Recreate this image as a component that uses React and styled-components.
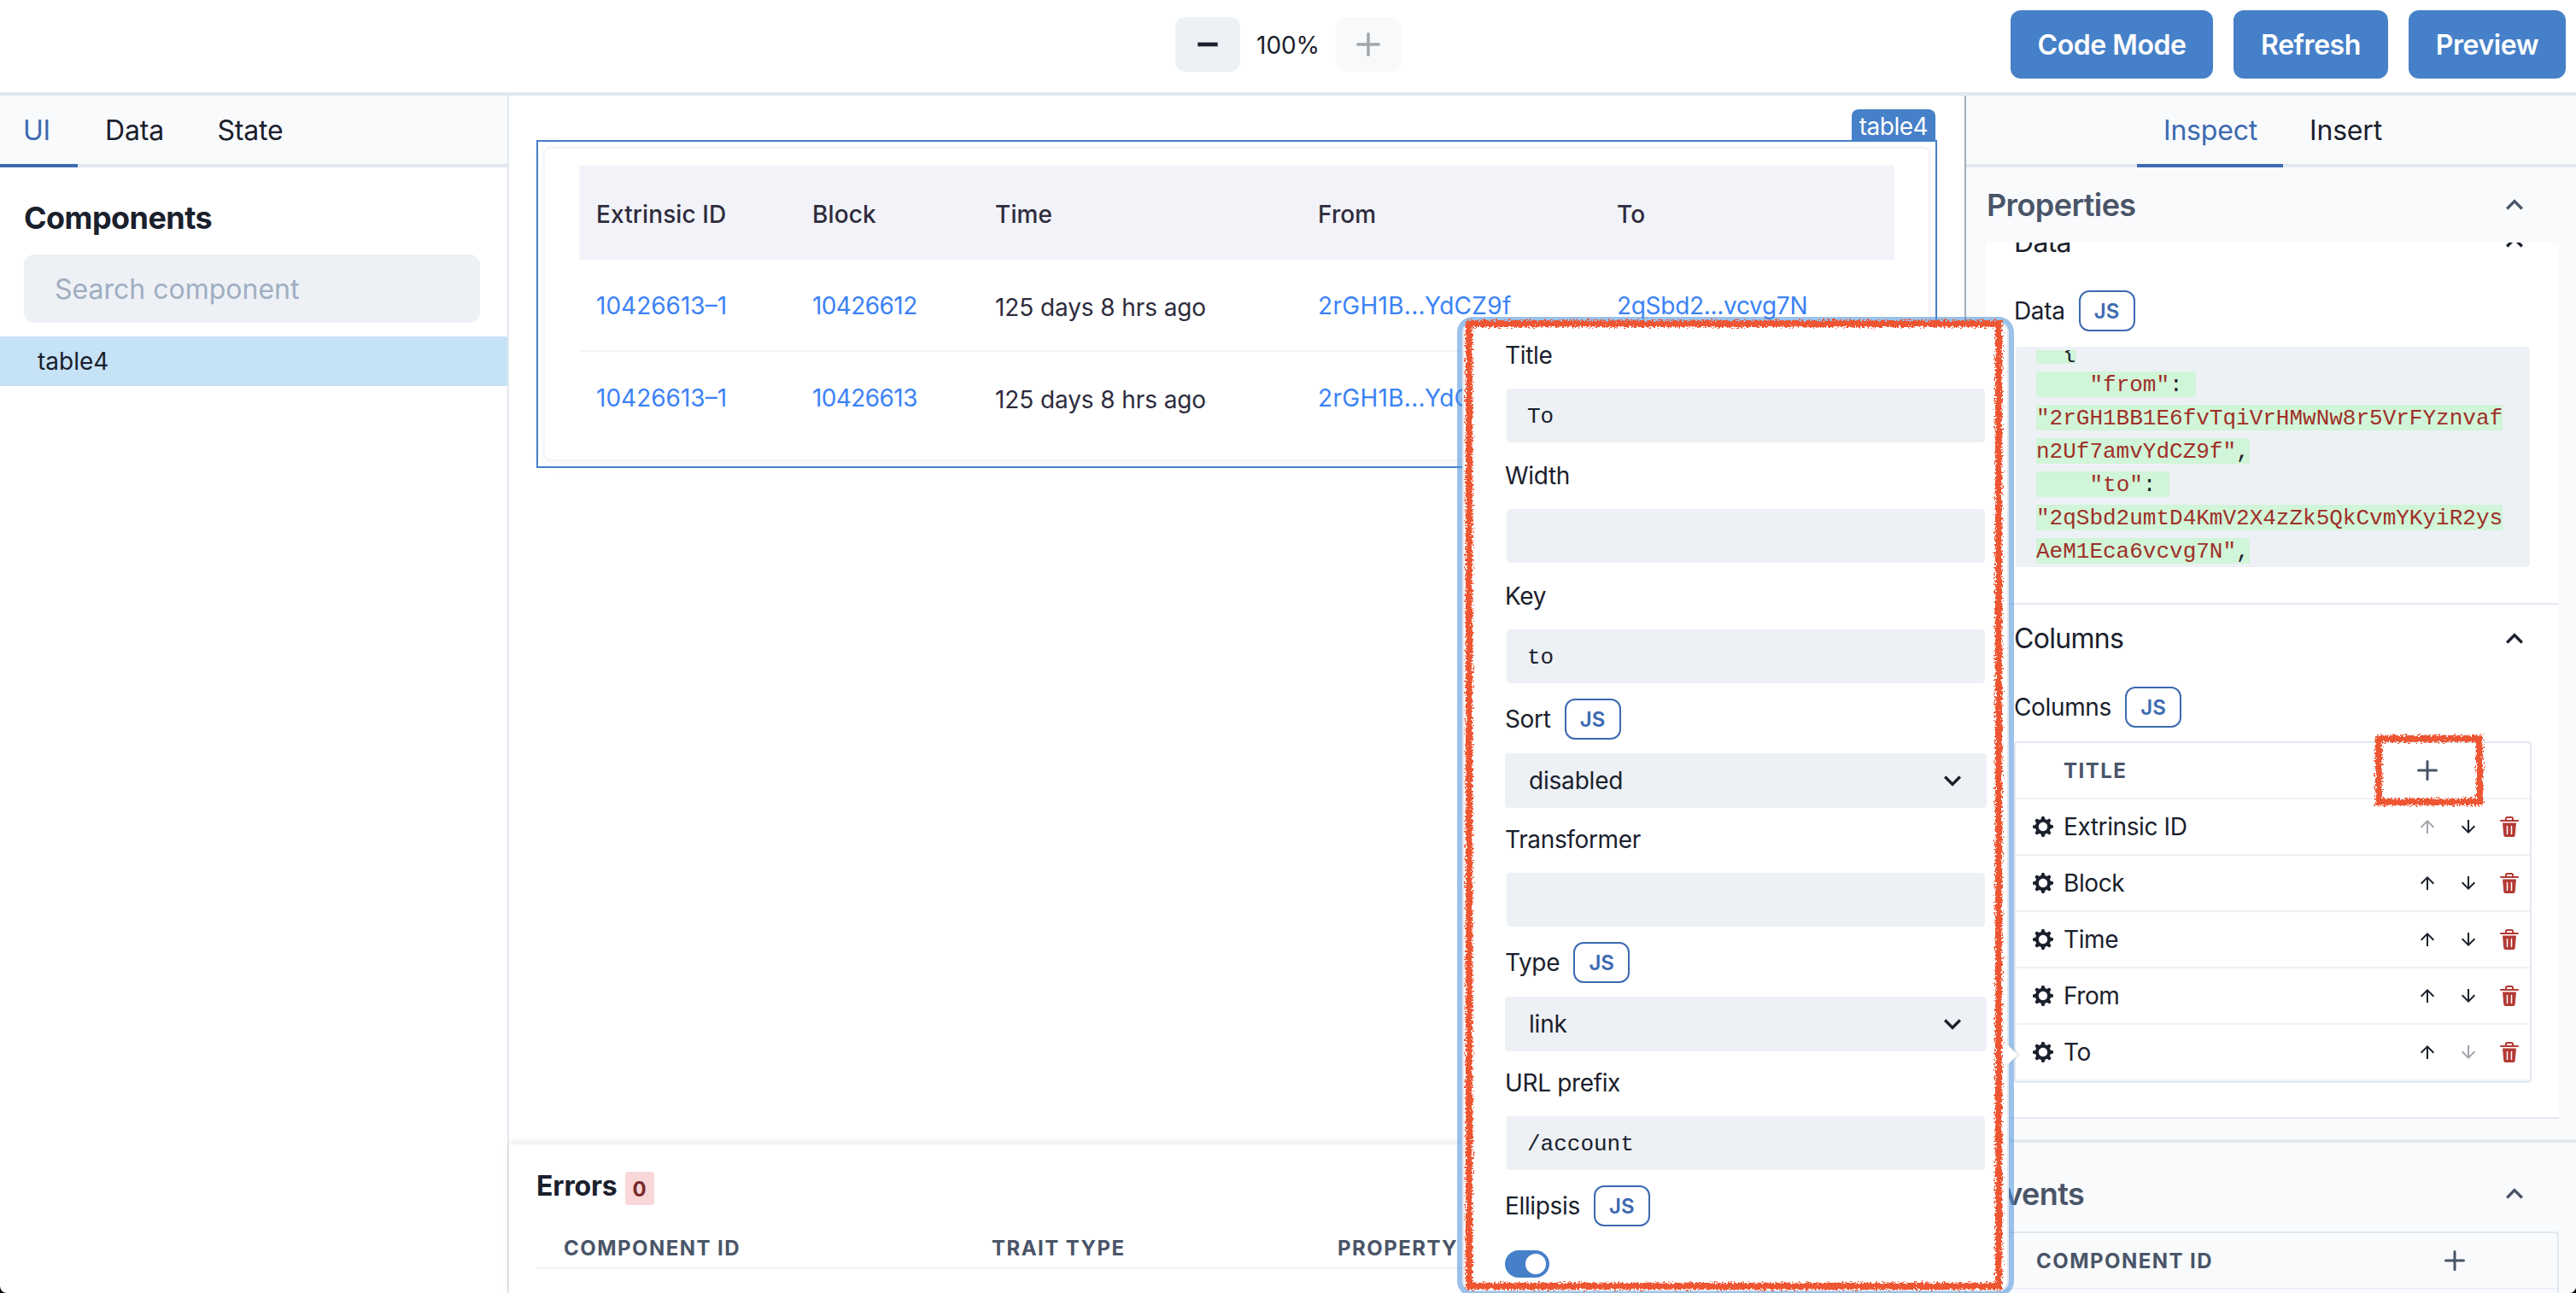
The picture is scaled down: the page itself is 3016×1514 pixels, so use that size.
import React, { useState } from "react";
import styled, { createGlobalStyle } from "styled-components";

const columns = ["Extrinsic ID", "Block", "Time", "From", "To"];

const rows = [
  { id: "10426613–1", block: "10426612", time: "125 days 8 hrs ago", from: "2rGH1B...YdCZ9f", to: "2qSbd2...vcvg7N" },
  { id: "10426613–1", block: "10426613", time: "125 days 8 hrs ago", from: "2rGH1B...YdCZ9f", to: "2qSbd2...vcvg7N" },
];

const Icon = ({ size = 24, box = 24, children }) => (
  <svg width={size} height={size} viewBox={`0 0 ${box} ${box}`} fill="currentColor">
    {children}
  </svg>
);

const AddIcon = ({ size }) => (
  <Icon size={size}>
    <path d="M0,12a1.5,1.5,0,0,0,1.5,1.5h8.75a.25.25,0,0,1,.25.25V22.5a1.5,1.5,0,0,0,3,0V13.75a.25.25,0,0,1,.25-.25H22.5a1.5,1.5,0,0,0,0-3H13.75a.25.25,0,0,1-.25-.25V1.5a1.5,1.5,0,0,0-3,0v8.75a.25.25,0,0,1-.25.25H1.5A1.5,1.5,0,0,0,0,12Z" />
  </Icon>
);

const MinusIcon = ({ size }) => (
  <Icon size={size}>
    <rect x="2" y="10" width="20" height="4" />
  </Icon>
);

const ChevronUp = () => (
  <Icon size={40}>
    <path d="M12 8l-6 6 1.41 1.41L12 10.83l4.59 4.58L18 14z" />
  </Icon>
);

const ChevronDown = () => (
  <Icon size={40}>
    <path d="M16.59 8.59L12 13.17 7.41 8.59 6 10l6 6 6-6z" />
  </Icon>
);

const ArrowUp = () => (
  <Icon>
    <path d="M4 12l1.41 1.41L11 7.83V20h2V7.83l5.58 5.59L20 12l-8-8-8 8z" />
  </Icon>
);

const ArrowDown = () => (
  <Icon>
    <path d="M20 12l-1.41-1.41L13 16.17V4h-2v12.17l-5.58-5.59L4 12l8 8 8-8z" />
  </Icon>
);

const GearIcon = () => (
  <Icon box={14}>
    <path
      fillRule="evenodd"
      d="M14 7.77v-1.6l-1.94-.64-.45-1.09.88-1.84-1.13-1.13-1.81.91-1.09-.45-.69-1.92h-1.6l-.63 1.94-1.11.45-1.84-.88-1.13 1.13.91 1.81-.45 1.09L0 6.23v1.59l1.94.64.45 1.09-.88 1.84 1.13 1.13 1.81-.91 1.09.45.69 1.92h1.59l.63-1.94 1.11-.45 1.84.88 1.13-1.13-.92-1.81.47-1.09L14 7.75v.02zM7 10c-1.66 0-3-1.34-3-3s1.34-3 3-3 3 1.34 3 3-1.34 3-3 3z"
    />
  </Icon>
);

const TrashIcon = () => (
  <Icon>
    <path d="M19.452 7.5H4.547a.5.5 0 00-.5.545l1.287 14.136A2 2 0 007.326 24h9.347a2 2 0 001.992-1.819L19.95 8.045a.5.5 0 00-.129-.382.5.5 0 00-.369-.163zm-9.2 13a.75.75 0 01-1.5 0v-9a.75.75 0 011.5 0zm5 0a.75.75 0 01-1.5 0v-9a.75.75 0 011.5 0zM22 4h-4.75a.25.25 0 01-.25-.25V2.5A2.5 2.5 0 0014.5 0h-5A2.5 2.5 0 007 2.5v1.25a.25.25 0 01-.25.25H2a1 1 0 000 2h20a1 1 0 000-2zM9 3.75V2.5a.5.5 0 01.5-.5h5a.5.5 0 01.5.5v1.25a.25.25 0 01-.25.25h-5.5A.25.25 0 019 3.75z" />
  </Icon>
);

// crayon style highlight frame
const Crayon = ({ width, height, id }) => (
  <svg width={width} height={height}>
    <filter id={id} filterUnits="userSpaceOnUse" x="0" y="0" width={width} height={height}>
      <feTurbulence type="fractalNoise" baseFrequency="0.45" numOctaves="2" seed="4" result="noise" />
      <feDisplacementMap in="SourceGraphic" in2="noise" scale="9" xChannelSelector="R" yChannelSelector="G" />
    </filter>
    <rect
      x="8"
      y="8"
      width={width - 16}
      height={height - 16}
      fill="none"
      stroke="#ee5430"
      strokeWidth="8"
      filter={`url(#${id})`}
    />
  </svg>
);

function App() {
  const [ellipsis, setEllipsis] = useState(true);

  return (
    <Window>
      <GlobalStyle />
      <Header>
        <span />
        <Zoom>
          <ZoomButton><MinusIcon size={28} /></ZoomButton>
          <ZoomValue>100%</ZoomValue>
          <ZoomButton disabled><AddIcon size={28} /></ZoomButton>
        </Zoom>
        <Actions>
          <Button $w={237}>Code Mode</Button>
          <Button $w={181}>Refresh</Button>
          <Button $w={184}>Preview</Button>
        </Actions>
      </Header>
      <Body>
        <Sidebar>
          <Tabs $start>
            <Tab $active $w={91} $pad="0 5px 0 0">UI</Tab>
            <Tab $w={133}>Data</Tab>
            <Tab $w={138}>State</Tab>
          </Tabs>
          <SidebarTitle>Components</SidebarTitle>
          <Search placeholder="Search component" />
          <TreeItem>table4</TreeItem>
        </Sidebar>
        <Main>
          <Canvas>
            <Selection>
              <SelectionTag>table4</SelectionTag>
              <Card>
                <TableHead>
                  {columns.map((c) => <span key={c}>{c}</span>)}
                </TableHead>
                {rows.map((row, i) => (
                  <TableRow key={i}>
                    <Link>{row.id}</Link>
                    <Link $spacing={-0.6}>{row.block}</Link>
                    <span>{row.time}</span>
                    <Link $spacing={0.3}>{row.from}</Link>
                    <Link $spacing={-0.3}>{row.to}</Link>
                  </TableRow>
                ))}
              </Card>
            </Selection>
          </Canvas>
          <Errors>
            <ErrorsTitle>Errors <Badge>0</Badge></ErrorsTitle>
            <ErrorsHead>
              <Caps>COMPONENT ID</Caps>
              <Caps>TRAIT TYPE</Caps>
              <Caps>PROPERTY</Caps>
            </ErrorsHead>
          </Errors>
        </Main>
        <Inspector>
          <Tabs $pad="0 0 0 3px">
            <Tab $active $w={171} $pad="0 0 0 1px">Inspect</Tab>
            <Tab $w={146} $pad="0 0 0 1px">Insert</Tab>
          </Tabs>
          <PanelHeader>Properties<ChevronUp /></PanelHeader>
          <PanelBody>
            <Scrolled>
              <Section>
                <SectionHeader>Data<ChevronUp /></SectionHeader>
                <SectionBody>
                  <LabelRow>Data<JsButton>JS</JsButton></LabelRow>
                  <Code>
                    <pre>
                      <mark>{"  {"}</mark>{"\n"}
                      <mark>{"    "}<b>"from"</b>{": "}</mark>{"\n"}
                      <mark><b>"2rGH1BB1E6fvTqiVrHMwNw8r5VrFYznvaf</b></mark>{"\n"}
                      <mark><b>n2Uf7amvYdCZ9f"</b>,</mark>{"\n"}
                      <mark>{"    "}<b>"to"</b>{": "}</mark>{"\n"}
                      <mark><b>"2qSbd2umtD4KmV2X4zZk5QkCvmYKyiR2ys</b></mark>{"\n"}
                      <mark><b>AeM1Eca6vcvg7N"</b>,</mark>
                    </pre>
                  </Code>
                </SectionBody>
              </Section>
              <Section>
                <SectionHeader>Columns<ChevronUp /></SectionHeader>
                <SectionBody>
                  <LabelRow>Columns<JsButton>JS</JsButton></LabelRow>
                  <List>
                    <ListRow>
                      <Caps $indent={56}>TITLE</Caps>
                      <IconButton $color="#4a5568"><AddIcon /></IconButton>
                      <AddFrame><Crayon id="frame-add" width={134} height={90} /></AddFrame>
                      <span />
                      <span />
                    </ListRow>
                    {columns.map((name, i) => (
                      <ListRow key={name}>
                        <ListName><GearIcon />{name}</ListName>
                        <IconButton disabled={i === 0}><ArrowUp /></IconButton>
                        <IconButton disabled={i === columns.length - 1}><ArrowDown /></IconButton>
                        <IconButton $color="#b43a35"><TrashIcon /></IconButton>
                      </ListRow>
                    ))}
                  </List>
                </SectionBody>
              </Section>
            </Scrolled>
          </PanelBody>
          <EventsPanel>
            <PanelHeader>Events<ChevronUp /></PanelHeader>
            <EventsTable>
              <EventsRow>
                <Caps $indent={56}>COMPONENT ID</Caps>
                <AddIcon />
              </EventsRow>
            </EventsTable>
          </EventsPanel>
        </Inspector>
      </Body>

      <Popover>
        <PopoverArrow />
        <Field>
          <Label>Title</Label>
          <Input defaultValue="To" />
        </Field>
        <Field>
          <Label>Width</Label>
          <Input />
        </Field>
        <Field>
          <Label>Key</Label>
          <Input defaultValue="to" />
        </Field>
        <Field>
          <LabelRow>Sort<JsButton>JS</JsButton></LabelRow>
          <Select>disabled<ChevronDown /></Select>
        </Field>
        <Field>
          <Label>Transformer</Label>
          <Input />
        </Field>
        <Field>
          <LabelRow>Type<JsButton>JS</JsButton></LabelRow>
          <Select>link<ChevronDown /></Select>
        </Field>
        <Field>
          <Label>URL prefix</Label>
          <Input defaultValue="/account" />
        </Field>
        <Field>
          <LabelRow>Ellipsis<JsButton>JS</JsButton></LabelRow>
          <Switch $on={ellipsis} onClick={() => setEllipsis(!ellipsis)} />
        </Field>
        <PopoverFrame><Crayon id="frame-popover" width={636} height={1143} /></PopoverFrame>
      </Popover>
    </Window>
  );
}

const GlobalStyle = createGlobalStyle`
  * {
    box-sizing: border-box;
  }

  html {
    background: #000;
  }

  body {
    margin: 0;
    overflow: hidden;
    color: #1a202c;
    font-family: Inter, "Liberation Sans", sans-serif;
    font-size: 32px;
    line-height: 1.5;
  }

  svg {
    display: block;
    flex-shrink: 0;
  }

  button,
  input {
    border: none;
    padding: 0;
    color: inherit;
    font-family: inherit;
  }
`;

const Window = styled.div`
  position: relative;
  display: flex;
  flex-direction: column;
  width: 3016px;
  height: 1514px;
  overflow: hidden;
  background: #fff;
  border-radius: 0 0 8px 8px;
`;

const Header = styled.header`
  display: grid;
  grid-template-columns: 1fr auto 1fr;
  align-items: center;
  height: 112px;
  padding: 0 12px 4px 12px;
  border-bottom: 4px solid #e2e8f0;
`;

const Zoom = styled.div`
  display: flex;
  align-items: center;
`;

const ZoomButton = styled.button`
  display: flex;
  align-items: center;
  justify-content: center;
  width: 76px;
  height: 64px;
  border-radius: 12px;
  background: #edf1f6;

  &:disabled {
    opacity: 0.4;
  }
`;

const ZoomValue = styled.span`
  width: 112px;
  padding-top: 1px;
  text-align: center;
  font-size: 28px;
  letter-spacing: -0.1px;
`;

const Actions = styled.div`
  display: flex;
  justify-content: flex-end;
  gap: 24px;
`;

const Button = styled.button`
  width: ${(p) => p.$w}px;
  height: 80px;
  padding-top: 1px;
  border-radius: 12px;
  background: #4680c8;
  color: #fff;
  font-size: 32px;
  font-weight: 600;
  letter-spacing: -0.45px;
`;

const Body = styled.div`
  display: flex;
  flex: 1;
  min-height: 0;
`;

const Sidebar = styled.aside`
  width: 596px;
  border-right: 2px solid #e2e8f0;
`;

const Tabs = styled.div`
  display: flex;
  justify-content: ${(p) => (p.$start ? "flex-start" : "center")};
  height: 84px;
  padding: ${(p) => p.$pad || 0};
  background: #f9fafc;
  box-shadow: inset 0 -4px 0 #e2e8f0;
`;

const Tab = styled.div`
  display: flex;
  align-items: center;
  justify-content: center;
  width: ${(p) => p.$w}px;
  padding: ${(p) => p.$pad || 0};
  border-top: 2px solid transparent;
  border-bottom: 4px solid ${(p) => (p.$active ? "#3c6ab0" : "transparent")};
  color: ${(p) => (p.$active ? "#3c6ab0" : "#1a202c")};
  letter-spacing: -0.2px;
`;

const SidebarTitle = styled.h2`
  margin: 32px 28px 16px;
  font-size: 36px;
  font-weight: 700;
  line-height: 54px;
  letter-spacing: -0.55px;
`;

const Search = styled.input`
  display: block;
  width: 534px;
  height: 80px;
  margin: 0 28px 16px;
  padding: 1px 36px 0;
  border-radius: 12px;
  background: #edf1f6;
  font-size: 32px;

  &::placeholder {
    color: #a0aec0;
  }
`;

const TreeItem = styled.div`
  height: 58px;
  padding-left: 44px;
  background: #c5e2f6;
  font-size: 28px;
  line-height: 58px;
`;

const Main = styled.main`
  display: flex;
  flex-direction: column;
  flex: 1;
  min-width: 0;
`;

const Canvas = styled.div`
  height: 1228px;
  padding: 52px 32px 0;
`;

const Selection = styled.div`
  position: relative;
  height: 384px;
  padding: 6px;
  border: 2px solid #4680c8;
`;

const SelectionTag = styled.div`
  position: absolute;
  right: 0;
  bottom: 100%;
  height: 38px;
  width: 98px;
  text-align: center;
  border-radius: 8px 8px 0 0;
  background: #4680c8;
  color: #fff;
  font-size: 28px;
  line-height: 41px;
  letter-spacing: -0.5px;
`;

const Card = styled.div`
  height: 368px;
  padding: 20px 40px;
  border: 2px solid #f2f3f8;
  border-radius: 8px;
  background: #fff;
  box-shadow: 0 2px 20px rgba(0, 0, 0, 0.04);
`;

const TableHead = styled.div`
  display: grid;
  grid-template-columns: 253px 214px 378px 350px 1fr;
  align-items: center;
  height: 110px;
  background: #f2f3f9;
  color: #2e2c3d;
  font-size: 28px;
  font-weight: 500;
  letter-spacing: 0.1px;

  span {
    padding: 3px 0 0 20px;
  }
`;

const TableRow = styled(TableHead)`
  height: 108px;
  background: none;
  font-weight: 400;
  letter-spacing: -0.1px;

  & + & {
    border-top: 2px solid #f2f3f8;
    margin-top: -2px;
    height: 110px;
  }
`;

const Link = styled.a`
  padding: 0 0 0 20px;
  color: #3b82f6;
  letter-spacing: ${(p) => p.$spacing || 0}px;
`;

const Errors = styled.section`
  flex: 1;
  padding: 25px 32px 24px;
  background: #fff;
  box-shadow: 0 -2px 8px rgba(0, 0, 0, 0.1);
`;

const ErrorsTitle = styled.h3`
  display: flex;
  align-items: center;
  gap: 9px;
  margin: 0;
  font-size: 32px;
  font-weight: 700;
  line-height: 48px;
  letter-spacing: -0.15px;
`;

const Badge = styled.span`
  width: 34px;
  height: 39px;
  margin-top: 5px;
  border-radius: 4px;
  background: #f9d7d8;
  color: #7b2a2c;
  text-align: center;
  font-size: 24px;
  line-height: 41px;
`;

const ErrorsHead = styled.div`
  display: grid;
  grid-template-columns: 501px 405px 1fr;
  height: 73px;
  padding: 32px 0 0 32px;
  border-bottom: 2px solid #edf2f7;
`;

const Caps = styled.span`
  padding: 1px 0 0 ${(p) => p.$indent || 0}px;
  color: #4a5568;
  font-size: 24px;
  font-weight: 700;
  letter-spacing: 1.45px;
  line-height: 32px;
`;

const Inspector = styled.aside`
  width: 716px;
  border-left: 2px solid #a0aec0;
  background: #f9fafc;
`;

const PanelHeader = styled.div`
  display: flex;
  align-items: center;
  justify-content: space-between;
  height: 88px;
  padding: 0 52px 0 24px;
  color: #4a5568;
  font-size: 36px;
  font-weight: 600;
  letter-spacing: -0.6px;
`;

const PanelBody = styled.div`
  height: 1026px;
  margin: 0 20px 24px 24px;
  overflow: hidden;
  background: #fff;
`;

// content is scrolled down by 40px
const Scrolled = styled.div`
  margin-top: -40px;
`;

const Section = styled.div`
  border-bottom: 2px solid #e2e8f0;
`;

const SectionHeader = styled.div`
  display: flex;
  align-items: center;
  justify-content: space-between;
  height: 80px;
  padding: 0 32px;
  line-height: 50px;
  letter-spacing: -0.7px;
`;

const SectionBody = styled.div`
  display: flex;
  flex-direction: column;
  gap: 16px;
  padding: 16px 32px 40px;
`;

const LabelRow = styled.div`
  display: flex;
  align-items: center;
  gap: 16px;
  height: 48px;
  font-size: 28px;
  letter-spacing: -0.35px;
`;

const JsButton = styled.button`
  width: 66px;
  height: 48px;
  border: 2px solid #3c6ab0;
  border-radius: 12px;
  background: none;
  color: #3c6ab0;
  font-size: 24px;
  font-weight: 600;
`;

const Code = styled.div`
  height: 258px;
  margin: 2px;
  padding: 4px 24px;
  overflow: hidden;
  border-radius: 4px;
  background: #edf1f6;

  pre {
    height: 250px;
    margin: 0;
    padding: 0;
    overflow: hidden;
    color: #1a202c;
    font-family: "Liberation Mono", monospace;
    font-size: 26px;
    line-height: 39px;
    white-space: pre;
    display: flex;
    flex-direction: column;
    justify-content: flex-end;
    align-items: flex-start;
    gap: 9px;
  }

  mark {
    display: block;
    height: 30px;
    line-height: 32px;
    background: #d1f5d8;
    color: inherit;
    flex-shrink: 0;
  }

  b {
    color: #9f2f28;
    font-weight: 400;
  }
`;

const List = styled.div`
  height: 400px;
  border: 2px solid #e2e8f0;
  border-radius: 4px;
`;

const ListRow = styled.div`
  position: relative;
  display: grid;
  grid-template-columns: 1fr 48px 48px 48px;
  align-items: center;
  height: 66px;
  border-bottom: 2px solid #edf2f7;
`;

const ListName = styled.span`
  display: flex;
  align-items: center;
  gap: 12px;
  padding-left: 20px;
  font-size: 28px;
  letter-spacing: -0.4px;
`;

const IconButton = styled.button`
  display: flex;
  justify-content: center;
  background: none;
  color: ${(p) => p.$color || "#1a202c"};

  &:disabled {
    opacity: 0.4;
  }
`;

const AddFrame = styled.div`
  position: absolute;
  top: -13px;
  right: 51px;
`;

const EventsPanel = styled.div`
  padding-top: 16px;
  border-top: 4px solid #e2e8f0;
`;

const EventsTable = styled.div`
  height: 120px;
  margin: 0 20px 0 24px;
  border: 2px solid #e2e8f0;
  border-radius: 4px;
`;

const EventsRow = styled.div`
  display: flex;
  align-items: center;
  justify-content: space-between;
  height: 66px;
  padding-right: 108px;
  border-bottom: 2px solid #edf2f7;
  color: #4a5568;
`;

const Popover = styled.div`
  position: absolute;
  top: 377px;
  left: 1712px;
  width: 640px;
  height: 1135px;
  padding: 16px 24px 0 48px;
  display: flex;
  flex-direction: column;
  gap: 16px;
  border: 2px solid #e2e8f0;
  border-radius: 12px;
  background: #fff;
  box-shadow: 0 0 0 6px rgba(73, 143, 218, 0.55);
`;

const PopoverArrow = styled.div`
  position: absolute;
  top: 848px;
  right: -9px;
  width: 16px;
  height: 16px;
  background: #fff;
  transform: rotate(45deg);
  box-shadow: 2px -2px 2px rgba(160, 174, 192, 0.3);
`;

const PopoverFrame = styled.div`
  position: absolute;
  top: -8px;
  left: -2px;
  pointer-events: none;
`;

const Field = styled.div`
  display: flex;
  flex-direction: column;
  gap: 16px;
`;

const Label = styled.label`
  font-size: 28px;
  line-height: 42px;
  letter-spacing: -0.35px;
`;

const Input = styled.input`
  height: 63px;
  margin: 2px;
  padding: 2px 24px 0;
  border-radius: 4px;
  background: #edf1f6;
  font-family: "Liberation Mono", monospace;
  font-size: 26px;
`;

const Select = styled.div`
  display: flex;
  align-items: center;
  justify-content: space-between;
  height: 64px;
  padding: 0 20px 0 28px;
  border-radius: 4px;
  background: #edf1f6;
  font-size: 28px;
  letter-spacing: -0.2px;
`;

const Switch = styled.button`
  width: 52px;
  height: 32px;
  margin-top: 12px;
  padding: 4px;
  border-radius: 16px;
  background: ${(p) => (p.$on ? "#4680c8" : "#cbd5e0")};

  &::after {
    content: "";
    display: block;
    width: 24px;
    height: 24px;
    margin-left: ${(p) => (p.$on ? 20 : 0)}px;
    border-radius: 50%;
    background: #fff;
  }
`;

export default App;
